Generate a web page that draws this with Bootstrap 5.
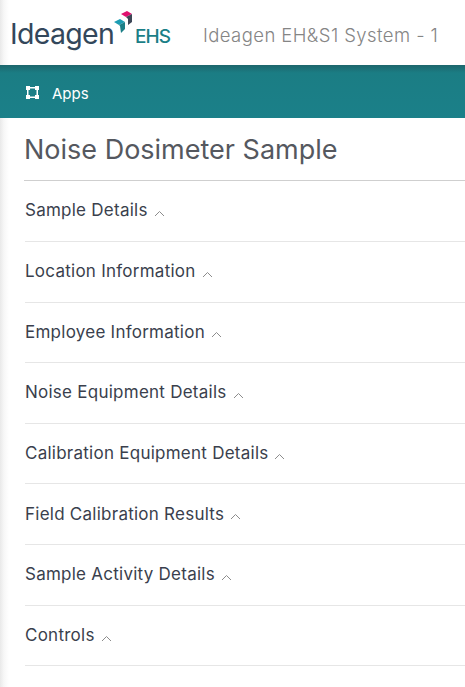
<!DOCTYPE html>
<html lang="en">
<head>
  <meta charset="UTF-8" />
  <meta name="viewport" content="width=device-width, initial-scale=1.0"/>
  <title>Noise Dosimeter Sample</title>
  <link rel="stylesheet" href="https://cdn.jsdelivr.net/npm/bootstrap@5.3.0/dist/css/bootstrap.min.css">
  <style>
    body {
      font-family: "Inter", "Liberation Sans", sans-serif;
      color: #3a3f4d;
      overflow: hidden;
    }
    .page-shell {
      height: 687px;
      overflow: hidden;
    }
    .edge-shade {
      background: linear-gradient(90deg, #e9e9e9 0, #f7f7f7 4px, #fff 9px);
    }
    .top-head {
      height: 65px;
      padding-left: 10px;
    }
    .logo-word {
      font-size: 28.5px;
      letter-spacing: -0.7px;
      color: #33475b;
      line-height: 1;
      margin-top: 4px;
    }
    .logo-mark {
      width: 20px;
      height: 26px;
      margin-left: -1px;
      margin-top: -19px;
    }
    .logo-ehs {
      font-size: 19px;
      font-weight: 500;
      letter-spacing: -1px;
      color: #1b7f87;
      margin-left: 2px;
      margin-top: 7px;
      line-height: 1;
    }
    .sys-name {
      font-size: 18.5px;
      font-weight: 300;
      letter-spacing: 0.42px;
      color: #858585;
      margin-left: 33px;
      margin-top: 6px;
      white-space: nowrap;
    }
    .apps-bar {
      height: 53px;
      padding-left: 26px;
      padding-top: 5px;
      background: linear-gradient(#1d666c 0, #1b7d84 8px, #1b8089 100%);
      color: #fff;
      font-size: 15px;
      font-weight: 400;
    }
    .apps-bar svg {
      width: 13px;
      height: 13px;
      margin-right: 13px;
      margin-top: -3px;
    }
    .main-area {
      padding-left: 25px;
    }
    .page-title {
      height: 63.25px;
      font-size: 27px;
      font-weight: 400;
      color: #55585f;
      border-bottom: 1px solid #cfcfcf;
      margin: 0 0 0 -1px;
      padding-top: 3px;
    }
    .sect-row {
      height: 60.65px;
      font-size: 17px;
      letter-spacing: 0.25px;
      border-bottom: 1px solid #e6e6e6;
      white-space: nowrap;
    }
    .sect-row svg {
      width: 11px;
      height: 7px;
      margin-left: 6px;
      margin-top: 5px;
    }
  </style>
</head>
<body>
  <div class="page-shell d-flex flex-column">
    <!-- Brand header -->
    <header class="top-head edge-shade d-flex align-items-center">
      <span class="logo-word">Ideagen</span>
      <svg class="logo-mark" viewBox="0 0 20 26">
        <polygon points="8,4 14,1 19,4 13,7" fill="#e0106f"/>
        <polygon points="13,7 19,4 19,12 15,15 15,9" fill="#3d4756"/>
        <polygon points="1,12 7,9 12,12 6,15" fill="#1c9cb3"/>
        <polygon points="6,15 12,12 12,19 8,23 7,16" fill="#1c7f87"/>
      </svg>
      <span class="logo-ehs">EHS</span>
      <span class="sys-name">Ideagen EH&amp;S1 System - 1</span>
    </header>

    <!-- Apps bar -->
    <nav class="apps-bar d-flex align-items-center">
      <svg viewBox="0 0 13 13">
        <g fill="#fff">
          <rect x="0" y="0" width="4" height="4"/>
          <rect x="9" y="0" width="4" height="4"/>
          <rect x="0" y="9" width="4" height="4"/>
          <rect x="9" y="9" width="4" height="4"/>
          <rect x="3" y="1" width="7" height="1.500"/>
          <rect x="3" y="10.500" width="7" height="1.500"/>
          <rect x="1" y="3" width="1.500" height="7"/>
          <rect x="10.500" y="3" width="1.500" height="7"/>
        </g>
      </svg>
      <span>Apps</span>
    </nav>

    <main class="main-area edge-shade flex-grow-1">
      <h1 class="page-title d-flex align-items-center">Noise Dosimeter Sample</h1>
      <div class="sect-row d-flex align-items-center">Sample Details<svg viewBox="0 0 11 7"><path d="M1 6l4.500-4.500L10 6" fill="none" stroke="#8c8c8c"/></svg></div>
      <div class="sect-row d-flex align-items-center">Location Information<svg viewBox="0 0 11 7"><path d="M1 6l4.500-4.500L10 6" fill="none" stroke="#8c8c8c"/></svg></div>
      <div class="sect-row d-flex align-items-center">Employee Information<svg viewBox="0 0 11 7"><path d="M1 6l4.500-4.500L10 6" fill="none" stroke="#8c8c8c"/></svg></div>
      <div class="sect-row d-flex align-items-center">Noise Equipment Details<svg viewBox="0 0 11 7"><path d="M1 6l4.500-4.500L10 6" fill="none" stroke="#8c8c8c"/></svg></div>
      <div class="sect-row d-flex align-items-center">Calibration Equipment Details<svg viewBox="0 0 11 7"><path d="M1 6l4.500-4.500L10 6" fill="none" stroke="#8c8c8c"/></svg></div>
      <div class="sect-row d-flex align-items-center">Field Calibration Results<svg viewBox="0 0 11 7"><path d="M1 6l4.500-4.500L10 6" fill="none" stroke="#8c8c8c"/></svg></div>
      <div class="sect-row d-flex align-items-center">Sample Activity Details<svg viewBox="0 0 11 7"><path d="M1 6l4.500-4.500L10 6" fill="none" stroke="#8c8c8c"/></svg></div>
      <div class="sect-row d-flex align-items-center">Controls<svg viewBox="0 0 11 7"><path d="M1 6l4.500-4.500L10 6" fill="none" stroke="#8c8c8c"/></svg></div>
    </main>
  </div>
  <script src="https://cdn.jsdelivr.net/npm/bootstrap@5.3.0/dist/js/bootstrap.bundle.min.js"></script>
</body>
</html>
